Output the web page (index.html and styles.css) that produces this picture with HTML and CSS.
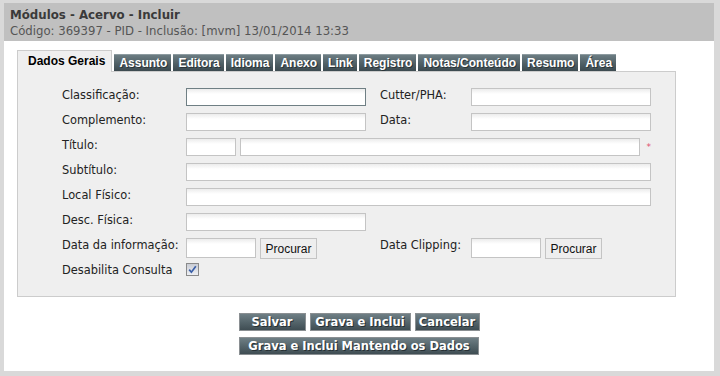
FILE: index.html
```html
<!DOCTYPE html>
<html lang="pt">
<head>
<meta charset="utf-8">
<title>Módulos - Acervo - Incluir</title>
<link rel="stylesheet" href="styles.css">
</head>
<body>
<div class="frame">
  <div class="header">
    <div class="title">Módulos - Acervo - Incluir</div>
    <div class="subtitle">Código: 369397 - PID - Inclusão: [mvm] 13/01/2014 13:33</div>
  </div>
  <div class="body">
    <div class="tabs">
      <span class="tab active">Dados Gerais</span>
      <span class="tab">Assunto</span>
      <span class="tab">Editora</span>
      <span class="tab">Idioma</span>
      <span class="tab">Anexo</span>
      <span class="tab">Link</span>
      <span class="tab">Registro</span>
      <span class="tab">Notas/Conteúdo</span>
      <span class="tab">Resumo</span>
      <span class="tab">Área</span>
    </div>
    <div class="panel">
      <div class="form">
        <label class="lbl">Classificação:</label>
        <div class="cell"><input class="inp w180 focus" type="text"></div>
        <label class="lbl">Cutter/PHA:</label>
        <div class="cell"><input class="inp w180" type="text"></div>

        <label class="lbl">Complemento:</label>
        <div class="cell"><input class="inp w180" type="text"></div>
        <label class="lbl">Data:</label>
        <div class="cell"><input class="inp w180" type="text"></div>

        <label class="lbl">Título:</label>
        <div class="cell span3"><input class="inp w50" type="text"><input class="inp w404" type="text"><span class="req">*</span></div>

        <label class="lbl">Subtítulo:</label>
        <div class="cell span3"><input class="inp w465" type="text"></div>

        <label class="lbl">Local Físico:</label>
        <div class="cell span3"><input class="inp w465" type="text"></div>

        <label class="lbl">Desc. Física:</label>
        <div class="cell span3"><input class="inp w180" type="text"></div>

        <label class="lbl">Data da informação:</label>
        <div class="cell"><input class="inp w70 tall" type="text"><button class="btn-find" type="button">Procurar</button></div>
        <label class="lbl">Data Clipping:</label>
        <div class="cell"><input class="inp w70 tall" type="text"><button class="btn-find" type="button">Procurar</button></div>

        <label class="lbl">Desabilita Consulta</label>
        <div class="cell span3"><span class="chk"><svg width="9" height="9" viewBox="0 0 9 9"><path d="M1.2 4.6 L3.4 7.2 L7.8 1.2" fill="none" stroke="#3a5fa8" stroke-width="1.7"/></svg></span></div>
      </div>
    </div>
    <div class="actions">
      <div class="row">
        <button class="btn b-salvar" type="button">Salvar</button>
        <button class="btn b-grava" type="button">Grava e Inclui</button>
        <button class="btn b-cancel" type="button">Cancelar</button>
      </div>
      <div class="row">
        <button class="btn b-wide" type="button">Grava e Inclui Mantendo os Dados</button>
      </div>
    </div>
  </div>
</div>
</body>
</html>
```
FILE: styles.css
```css
html, body {
  margin: 0;
  padding: 0;
  background: #ffffff;
}
.frame {
  box-sizing: border-box;
  width: 720px;
  height: 376px;
  border-style: solid;
  border-color: #d9d9d9;
  border-width: 3px 6px 5px 4px;
  background: #ffffff;
  font-family: "DejaVu Sans", Verdana, sans-serif;
}
.header {
  background: #c0c0c0;
  height: 38px;
  padding: 5px 0 0 6px;
  box-sizing: border-box;
}
.title {
  font-weight: bold;
  font-size: 11.8px;
  color: #3a3a3a;
  line-height: 14px;
}
.subtitle {
  font-size: 11.7px;
  color: #555555;
  line-height: 13px;
  margin-top: 3px;
}
.body {
  padding: 9px 0 0 13px;
}
.tabs {
  display: flex;
  align-items: flex-end;
  gap: 2px;
  height: 21px;
  font-family: "Liberation Sans", Arial, sans-serif;
  font-weight: bold;
  font-size: 12px;
}
.tab {
  box-sizing: border-box;
  height: 17px;
  line-height: 16px;
  padding: 0 4px 0 5px;
  color: #ffffff;
  background: linear-gradient(#6c7d83, #4f5f65 55%, #3c4a50);
  border-top: 1px solid #8d9ba0;
  text-shadow: 1px 1px 0 #2a3438;
}
.tab.active {
  height: 22px;
  line-height: 20px;
  padding: 0 6px 0 10px;
  color: #000000;
  background: #efefef;
  border: 1px solid #cccccc;
  border-bottom: none;
  text-shadow: none;
  position: relative;
  top: 1px;
}
.panel {
  box-sizing: border-box;
  width: 659px;
  height: 226px;
  background: #efefef;
  border: 1px solid #cccccc;
  padding: 15px 0 0 44px;
}
.form {
  display: grid;
  grid-template-columns: 124px 194px 91px 180px;
  grid-auto-rows: 25px;
  font-size: 11.4px;
  color: #222222;
}
.form .cell {
  padding-top: 1px;
}
.lbl {
  line-height: 16px;
  white-space: nowrap;
}
.cell {
  display: flex;
  align-items: flex-start;
  gap: 4px;
}
.span3 {
  grid-column: span 3;
}
.inp {
  box-sizing: border-box;
  height: 18px;
  margin: 0;
  padding: 0 2px;
  border: 1px solid #c4c4c4;
  background: linear-gradient(#ececec, #ffffff 5px);
  font: 11px "DejaVu Sans", sans-serif;
  outline: none;
}
.inp.focus {
  border-color: #6f7f84;
}
.inp.tall {
  height: 20px;
}
.w50 { width: 50px; }
.w70 { width: 70px; }
.w180 { width: 180px; }
.w404 { width: 404px; }
.w465 { width: 465px; }
.req {
  color: #e05070;
  font-size: 9px;
  line-height: 18px;
  margin-left: 3px;
}
.btn-find {
  box-sizing: border-box;
  height: 21px;
  width: 57px;
  padding: 0;
  margin: 0;
  border: 1px solid #c4c4c4;
  background: #eeeeee;
  font: 12px "Liberation Sans", Arial, sans-serif;
  color: #111111;
}
.chk {
  box-sizing: border-box;
  display: flex;
  align-items: center;
  justify-content: center;
  width: 13px;
  height: 13px;
  margin-top: 0;
  border: 1px solid #8a8a8a;
  background: linear-gradient(#c9ccd4, #eef0f4);
}
.actions {
  width: 710px;
  margin-left: -13px;
  padding-top: 16px;
  display: flex;
  flex-direction: column;
  align-items: center;
  gap: 6px;
}
.row {
  display: flex;
  gap: 4px;
}
.btn {
  box-sizing: border-box;
  height: 18px;
  margin: 0;
  padding: 0;
  border: 1px solid #8a8f92;
  background: linear-gradient(#6f7f85, #55656b 50%, #3f4d53);
  color: #ffffff;
  font: bold 11.5px "DejaVu Sans", Verdana, sans-serif;
  line-height: 16px;
  white-space: nowrap;
  text-shadow: 1px 1px 0 #263034;
}
.b-salvar { width: 67px; }
.b-grava { width: 101px; }
.b-cancel { width: 65px; }
.b-wide { width: 240px; }
```
